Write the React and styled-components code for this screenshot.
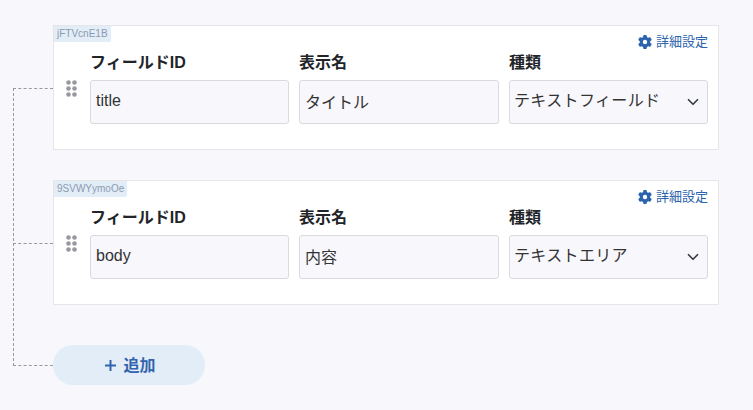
import React from "react";
import styled, { createGlobalStyle } from "styled-components";

const Global = createGlobalStyle`
  html, body { margin: 0; padding: 0; background: #f7f7fc; }
  body { font-family: "Liberation Sans", "Noto Sans CJK JP", sans-serif; color: #212529; }
`;

const Page = styled.div`
  width: 753px;
  height: 410px;
  overflow: hidden;
  box-sizing: border-box;
  padding: 25px 34px 0 53px;
  display: flex;
  flex-direction: column;
  align-items: stretch;
`;

const Card = styled.section`
  position: relative;
  box-sizing: border-box;
  height: 125px;
  margin-bottom: 30px;
  padding: 19px 10px 0 36px;
  background: #fff;
  border: 1px solid #e6e6ea;
  display: flex;
  &::before {
    content: "";
    position: absolute;
    left: -41px;
    top: 62px;
    width: 40px;
    border-bottom: 1px dashed #99979f;
  }
`;

const IdTag = styled.span`
  position: absolute;
  left: 0;
  top: 0;
  height: 16px;
  padding: 0 3px;
  background: #e3edf8;
  color: #8b9bb0;
  font-size: 10px;
  line-height: 16px;
  border-bottom-right-radius: 2px;
`;

const Settings = styled.a`
  position: absolute;
  right: 10px;
  top: 7px;
  display: flex;
  align-items: center;
  gap: 4px;
  color: #2b63ad;
  font-size: 13px;
  line-height: 18px;
`;

const Grip = styled.svg`
  position: absolute;
  left: 12px;
  top: 54px;
  width: 11px;
  height: 17px;
  fill: #99979f;
`;

const Fields = styled.div`
  flex: 1;
  display: grid;
  grid-template-columns: 199px 200px 199px;
  column-gap: 10px;
  align-content: start;
`;

const Field = styled.label`
  display: flex;
  flex-direction: column;
`;

const Label = styled.span`
  height: 35px;
  font-size: 16px;
  line-height: 35px;
  font-weight: 700;
  color: #212529;
`;

const Input = styled.input`
  box-sizing: border-box;
  width: 100%;
  height: 44px;
  padding: 0 5px 2px;
  background: #f7f7fc;
  border: 1px solid #d9d9de;
  border-radius: 3px;
  font: inherit;
  font-size: 16px;
  color: #333;
  outline: none;
`;

const SelectWrap = styled.div`
  position: relative;
  height: 44px;
`;

const Select = styled.select`
  appearance: none;
  box-sizing: border-box;
  width: 100%;
  height: 44px;
  padding: 0 28px 3px 4px;
  background: #f7f7fc;
  border: 1px solid #d9d9de;
  border-radius: 3px;
  font: inherit;
  font-size: 16px;
  letter-spacing: 0.35px;
  color: #333;
  outline: none;
`;

const Chevron = styled.svg`
  position: absolute;
  right: 9px;
  top: 16px;
  width: 12px;
  height: 12px;
  fill: none;
  stroke: #343a40;
  stroke-width: 2.2;
  stroke-linecap: round;
  stroke-linejoin: round;
  pointer-events: none;
`;

const AddButton = styled.button`
  align-self: flex-start;
  margin-top: 10px;
  width: 152px;
  height: 40px;
  padding: 0 0 3px 3px;
  border: none;
  border-radius: 20px;
  background: #e3edf8;
  color: #3264ad;
  font: inherit;
  font-size: 16px;
  font-weight: 700;
  display: flex;
  align-items: center;
  justify-content: center;
  gap: 7px;
`;

const Plus = styled.svg`
  width: 11px;
  height: 11px;
  margin-top: 3px;
  stroke: #3264ad;
  stroke-width: 2;
`;

const Gear = () => (
  <svg width="14" height="14" viewBox="0 0 512 512" fill="#2b63ad" aria-hidden="true">
    <path d="M495.9 166.6c3.2 8.7.5 18.4-6.4 24.6l-43.3 39.4c1.1 8.3 1.7 16.8 1.7 25.4s-.6 17.1-1.7 25.4l43.3 39.4c6.9 6.2 9.6 15.9 6.4 24.6-4.4 11.9-9.7 23.3-15.8 34.3l-4.7 8.1c-6.6 11-14 21.4-22.1 31.2-5.9 7.2-15.7 9.6-24.5 6.8l-55.7-17.7c-13.4 10.3-28.2 18.9-44 25.4l-12.5 57.1c-2 9.1-9 16.3-18.2 17.8-13.8 2.3-28 3.5-42.5 3.5s-28.7-1.2-42.5-3.5c-9.2-1.5-16.2-8.7-18.2-17.8l-12.5-57.1c-15.8-6.5-30.6-15.1-44-25.4l-55.6 17.8c-8.8 2.8-18.6.3-24.5-6.8-8.1-9.8-15.5-20.2-22.1-31.2l-4.7-8.1c-6.1-11-11.4-22.4-15.8-34.3-3.2-8.7-.5-18.4 6.4-24.6l43.3-39.4c-1.1-8.4-1.7-16.9-1.7-25.5s.6-17.1 1.7-25.4l-43.3-39.4c-6.9-6.2-9.6-15.9-6.4-24.6 4.4-11.9 9.7-23.3 15.8-34.3l4.7-8.1c6.6-11 14-21.4 22.1-31.2 5.9-7.2 15.7-9.6 24.5-6.8l55.7 17.7c13.4-10.3 28.2-18.9 44-25.4l12.5-57.1c2-9.1 9-16.3 18.2-17.8C227.3 1.2 241.5 0 256 0s28.7 1.2 42.5 3.5c9.2 1.5 16.2 8.7 18.2 17.8l12.5 57.1c15.8 6.5 30.6 15.1 44 25.4l55.7-17.7c8.8-2.8 18.6-.3 24.5 6.8 8.1 9.8 15.5 20.2 22.1 31.2l4.7 8.1c6.1 11 11.4 22.4 15.8 34.3zM256 336a80 80 0 1 0 0-160 80 80 0 1 0 0 160z" />
  </svg>
);

const GripIcon = () => (
  <Grip viewBox="0 0 11 17" aria-hidden="true">
    {[2.5, 8.5, 14.5].map((cy) => (
      <React.Fragment key={cy}>
        <circle cx="2.5" cy={cy} r="2.3" />
        <circle cx="8.5" cy={cy} r="2.3" />
      </React.Fragment>
    ))}
  </Grip>
);

const rows = [
  { id: "jFTVcnE1B", field: "title", name: "タイトル", type: "テキストフィールド" },
  { id: "9SVWYymoOe", field: "body", name: "内容", type: "テキストエリア" },
];

const Row = ({ row }) => (
  <Card>
    <IdTag>{row.id}</IdTag>
    <Settings>
      <Gear />
      詳細設定
    </Settings>
    <GripIcon />
    <Fields>
      <Field>
        <Label>フィールドID</Label>
        <Input readOnly value={row.field} />
      </Field>
      <Field>
        <Label>表示名</Label>
        <Input readOnly value={row.name} />
      </Field>
      <Field>
        <Label>種類</Label>
        <SelectWrap>
          <Select value={row.type} onChange={() => {}}>
            <option>{row.type}</option>
          </Select>
          <Chevron viewBox="0 0 16 16" aria-hidden="true">
            <path d="M2 5l6 6 6-6" />
          </Chevron>
        </SelectWrap>
      </Field>
    </Fields>
  </Card>
);

const Tree = styled.div`
  position: relative;
  display: flex;
  flex-direction: column;
  &::before {
    content: "";
    position: absolute;
    left: -40px;
    top: 63px;
    height: 278px;
    border-left: 1px dashed #99979f;
  }
  &::after {
    content: "";
    position: absolute;
    left: -40px;
    top: 340px;
    width: 40px;
    border-top: 1px dashed #99979f;
  }
`;

export default function App() {
  return (
    <>
      <Global />
      <Page>
        <Tree>
          {rows.map((r) => (
            <Row key={r.id} row={r} />
          ))}
          <AddButton>
            <Plus viewBox="0 0 11 11" aria-hidden="true">
              <path d="M0 5.5h11M5.5 0v11" />
            </Plus>
            <span>追加</span>
          </AddButton>
        </Tree>
      </Page>
    </>
  );
}
